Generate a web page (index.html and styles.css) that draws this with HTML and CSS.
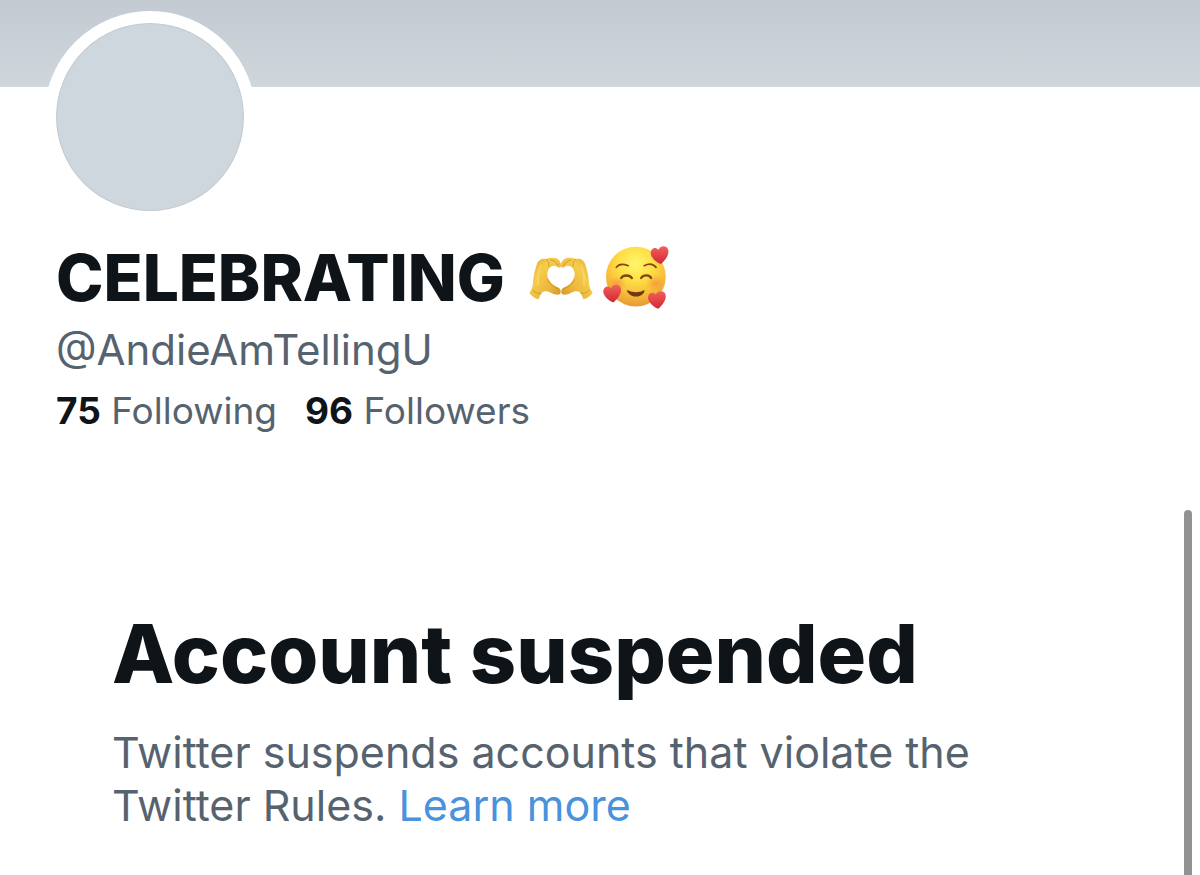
FILE: index.html
```html
<!DOCTYPE html>
<html lang="en">
<head>
    <meta charset="UTF-8">
    <meta name="viewport" content="width=device-width, initial-scale=1">
    <title>CELEBRATING (@AndieAmTellingU)</title>
    <link rel="stylesheet" href="styles.css">
</head>
<body>

<div class="banner"></div>

<main>
    <header class="profile">
        <div class="avatar"></div>
        <h1 class="name">
            <span>CELEBRATING</span>
            <span class="emojis">
                <svg class="hands" viewBox="7 15 192 129" role="img" aria-label="heart hands">
                    <defs>
                        <linearGradient id="skin" x1="0" y1="0" x2="1" y2="1">
                            <stop offset="0" stop-color="#dfa726"/>
                            <stop offset="0.35" stop-color="#f6cb4c"/>
                            <stop offset="0.7" stop-color="#eab53a"/>
                            <stop offset="1" stop-color="#d2921f"/>
                        </linearGradient>
                        <g id="hand">
                            <path fill="url(#skin)" d="M8 122 C16 112 19 102 19 90 C20 72 24 56 30 38 C34 25 45 19 58 21 C68 17 84 16 92 21 C99 25 102 31 103 38 C104 45 99 49 94 46 C88 41 79 39 72 45 C62 53 60 66 64 77 C69 91 80 101 96 107 C103 111 104 120 100 126 C94 130 82 127 74 123 C63 117 53 116 47 121 C41 127 39 134 36 142 C25 139 14 132 8 122 Z"/>
                            <path fill="none" stroke="#c48a1e" stroke-width="2" stroke-linecap="round" d="M72 24 C82 24 90 31 94 40 M59 22 C66 27 68 34 66 42"/>
                            <path fill="none" stroke="#c48a1e" stroke-width="3" stroke-linecap="round" opacity="0.7" d="M63 84 C70 98 82 106 96 111 M19 116 C26 122 34 125 43 124"/>
                            <path fill="none" stroke="#ffe27a" stroke-width="6" stroke-linecap="round" opacity="0.5" d="M42 40 C35 58 32 78 34 98"/>
                        </g>
                    </defs>
                    <use href="#hand"/>
                    <use href="#hand" transform="translate(206 0) scale(-1 1)"/>
                </svg>
                <svg class="face" viewBox="264 34 202 192" role="img" aria-label="smiling face with hearts">
                    <defs>
                        <radialGradient id="yellow" cx="0.5" cy="0.28" r="0.72">
                            <stop offset="0" stop-color="#fff66f"/>
                            <stop offset="0.4" stop-color="#ffdf45"/>
                            <stop offset="0.75" stop-color="#f6b93a"/>
                            <stop offset="1" stop-color="#e79a32"/>
                        </radialGradient>
                        <radialGradient id="blush">
                            <stop offset="0" stop-color="#ee6a37" stop-opacity="0.4"/>
                            <stop offset="1" stop-color="#ee6a37" stop-opacity="0"/>
                        </radialGradient>
                        <linearGradient id="red" x1="0" y1="0" x2="0" y2="1">
                            <stop offset="0" stop-color="#f3605b"/>
                            <stop offset="1" stop-color="#cf2833"/>
                        </linearGradient>
                        <path id="heart" fill="url(#red)" d="M3 26 C-9 21 -25 9 -27 -5 C-29 -20 -14 -29 -4 -17 C2 -30 20 -31 25 -19 C31 -3 15 17 3 26 Z"/>
                    </defs>
                    <circle cx="363" cy="126" r="90" fill="url(#yellow)"/>
                    <ellipse cx="306" cy="147" rx="28" ry="22" fill="url(#blush)"/>
                    <ellipse cx="422" cy="145" rx="28" ry="24" fill="url(#blush)"/>
                    <g fill="none" stroke="#7d4615" stroke-linecap="round">
                        <path stroke-width="5" d="M304 98 C312 87 325 87 340 93 M388 93 C402 86 416 88 424 98"/>
                        <path stroke-width="7" d="M319 130 C325 120 344 120 351 130 M379 130 C386 119 404 120 409 130"/>
                    </g>
                    <path fill="#713911" d="M338 167 C352 174 375 175 387 167 C391 165 389 172 386 176 C376 189 352 190 341 176 C336 171 335 165 338 167 Z"/>
                    <use href="#heart" transform="translate(435 62)"/>
                    <use href="#heart" transform="translate(292 178)"/>
                    <use href="#heart" transform="translate(427 197)"/>
                </svg>
            </span>
        </h1>
        <p class="handle">@AndieAmTellingU</p>
        <div class="stats">
            <a href="#"><strong>75</strong> Following</a>
            <a href="#"><strong>96</strong> Followers</a>
        </div>
    </header>

    <section class="notice">
        <h2>Account suspended</h2>
        <p>Twitter suspends accounts that violate the Twitter Rules. <a href="#">Learn more</a></p>
    </section>
</main>

<div class="scrollbar"></div>

</body>
</html>
```
FILE: styles.css
```css
* {
    box-sizing: border-box;
}

body {
    margin: 0;
    background: #fff;
    color: #0f1419;
    font-family: Inter, "Liberation Sans", sans-serif;
}

h1, h2, p {
    margin: 0;
}

a {
    color: inherit;
    text-decoration: none;
}

.banner {
    height: 87px;
    background: linear-gradient(#c3cad1, #cfd6dc);
}

.profile {
    padding: 0 56px;
}

/* pulled up over the banner */
.avatar {
    width: 212px;
    height: 212px;
    margin: -76px 0 0 -12px;
    border: 12px solid #fff;
    border-radius: 50%;
    background: #cfd7de;
    box-shadow: inset 0 0 0 1px #c3c9ce;
}

.name {
    display: flex;
    align-items: center;
    gap: 24px;
    margin-top: 17px;
    font-size: 64px;
    font-weight: 800;
    line-height: 76px;
}

.emojis {
    display: flex;
    align-items: center;
    gap: 10px;
}

.hands {
    width: 64px;
    height: 43px;
}

.face {
    width: 67px;
    height: 64px;
}

.handle {
    margin-top: 8px;
    color: #56636f;
    font-size: 42px;
    line-height: 52px;
}

.stats {
    display: flex;
    gap: 28px;
    margin-top: 12px;
    color: #56636f;
    font-size: 37px;
    line-height: 46px;
}

.stats strong {
    color: #0f1419;
    font-weight: 700;
}

.notice {
    max-width: 1000px;
    padding: 168px 0 44px 112px;
}

.notice h2 {
    font-size: 81px;
    font-weight: 800;
    line-height: 104px;
}

.notice p {
    margin-top: 20px;
    color: #56636f;
    font-size: 43px;
    line-height: 53px;
}

.notice a {
    color: #4a92dc;
}

.scrollbar {
    position: absolute;
    top: 510px;
    right: 8px;
    bottom: 0;
    width: 8px;
    border-radius: 4px 4px 0 0;
    background: #929292;
}
```
